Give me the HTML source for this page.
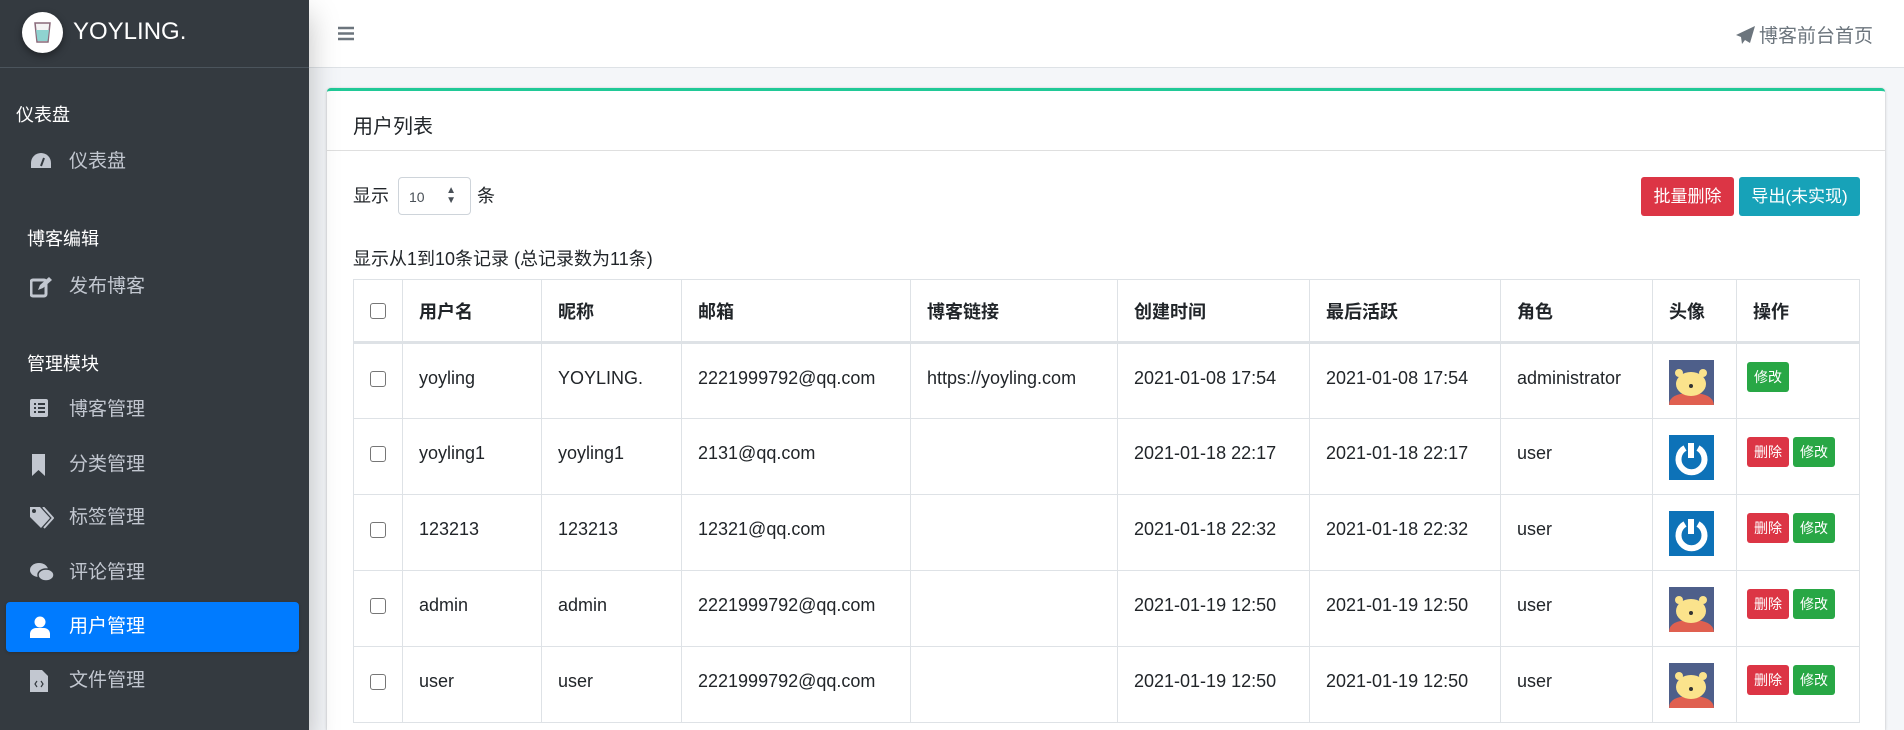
<!DOCTYPE html>
<html><head><meta charset="utf-8"><style>
*{box-sizing:border-box;margin:0;padding:0}
html,body{width:1904px;height:730px;overflow:hidden}
body{background:#f4f6f9;font-family:"Liberation Sans","Noto Sans CJK SC",sans-serif;color:#212529;position:relative}
.sb{position:absolute;left:0;top:0;width:309px;height:730px;background:#343a40;box-shadow:0 14px 28px rgba(0,0,0,.25);z-index:2}
.brand{height:68px;border-bottom:1px solid #4b545c;position:relative}
.logo{position:absolute;left:22px;top:12px;width:41px;height:41px;border-radius:50%;background:#fff;box-shadow:0 3px 8px rgba(0,0,0,.4)}
.bt{position:absolute;left:73px;top:18px;font-size:24px;color:#fff;font-weight:300}
.sec{position:absolute;color:#fff;font-size:18px}
.it{position:absolute;left:6px;width:293px;height:50px;color:#c2c7d0;font-size:19px;line-height:50px;padding-left:63px;border-radius:4px}
.it svg{position:absolute;left:24px;top:14px}
.it.act{background:#007bff;color:#fff;box-shadow:0 1px 3px rgba(0,0,0,.2)}
.hd{position:absolute;left:309px;top:0;right:0;height:68px;background:#fff;border-bottom:1px solid #dee2e6}
.card{position:absolute;left:327px;top:88px;width:1558px;height:642px;overflow:hidden;background:#fff;border-top:3px solid #20c997;border-radius:4px 4px 0 0;box-shadow:0 0 1px rgba(0,0,0,.125),0 1px 3px rgba(0,0,0,.2)}
.ch{height:60px;border-bottom:1px solid rgba(0,0,0,.125);font-size:20px;padding:19px 0 0 26px}
table{position:absolute;left:26px;top:188px;border-collapse:collapse;font-size:18px;table-layout:fixed}
td,th{border:1px solid #dee2e6;padding:0 16px;text-align:left;vertical-align:middle;white-space:nowrap;overflow:hidden}
th{height:63px;border-bottom:3px solid #dee2e6;font-weight:bold}
td{height:76px;vertical-align:top;padding-top:24px}
.cb{width:16px;height:16px;border:1px solid #767676;border-radius:3px;display:inline-block;vertical-align:middle}
.b{display:inline-block;color:#fff;font-size:14px;width:42px;height:30px;line-height:30px;text-align:center;border-radius:3px;margin-right:4px}
.r{background:#dc3545}.g{background:#28a745}
.av{width:45px;height:45px;display:block;margin-top:-8px}
td.op{padding-left:10px;padding-top:18px}
</style></head><body>
<div class="sb">
 <div class="brand"><div class="logo"><svg width="41" height="41" viewBox="0 0 41 41"><path d="M13 11h15l-2 19h-11z" fill="#f4f4f4" stroke="#8a6a7a" stroke-width="1.5"/><path d="M14 18h13l-1.5 11h-10z" fill="#8fd3d0"/></svg></div><div class="bt">YOYLING.</div></div>
 <div class="sec" style="left:16px;top:101px">仪表盘</div>
 <div class="it" style="top:137px"><svg width="22" height="20" viewBox="0 0 22 20"><path d="M11 2A10 10 0 0 0 1 12v5h20v-5A10 10 0 0 0 11 2z" fill="#c2c7d0"/><path d="M11 15l3-8" stroke="#343a40" stroke-width="2"/></svg>仪表盘</div>
 <div class="sec" style="left:27px;top:225px">博客编辑</div>
 <div class="it" style="top:262px"><svg width="22" height="22" viewBox="0 0 22 22"><rect x="1" y="4" width="15" height="16" rx="2" fill="none" stroke="#c2c7d0" stroke-width="3"/><path d="M8 14l2-5 9-8 3 3-9 8z" fill="#c2c7d0"/></svg>发布博客</div>
 <div class="sec" style="left:27px;top:350px">管理模块</div>
 <div class="it" style="top:385px"><svg width="20" height="20"><rect width="18" height="18" rx="2" fill="#c2c7d0"/><path d="M4 5h2M8 5h7M4 9h2M8 9h7M4 13h2M8 13h7" stroke="#343a40" stroke-width="2"/></svg>博客管理</div>
 <div class="it" style="top:440px"><svg width="18" height="22"><path d="M2 0h13v22l-6.5-6L2 22z" fill="#c2c7d0"/></svg>分类管理</div>
 <div class="it" style="top:493px"><svg width="24" height="22"><path d="M0 0h10l10 11-9 10L0 10z" fill="#c2c7d0"/><circle cx="4" cy="4" r="2" fill="#343a40"/><path d="M13 0l10 11-9 10" stroke="#c2c7d0" stroke-width="2" fill="none"/></svg>标签管理</div>
 <div class="it" style="top:548px"><svg width="24" height="22"><ellipse cx="9" cy="8" rx="9" ry="7" fill="#c2c7d0"/><ellipse cx="16" cy="13" rx="8" ry="6" fill="#c2c7d0" stroke="#343a40" stroke-width="1.5"/></svg>评论管理</div>
 <div class="it act" style="top:602px"><svg width="20" height="22"><circle cx="10" cy="6" r="5.5" fill="#fff"/><path d="M0 22v-4a6 6 0 0 1 6-6h8a6 6 0 0 1 6 6v4z" fill="#fff"/></svg>用户管理</div>
 <div class="it" style="top:656px"><svg width="18" height="22"><path d="M0 0h12l6 6v16H0z" fill="#c2c7d0"/><path d="M7 11l-2 3 2 3M11 11l2 3-2 3" stroke="#343a40" stroke-width="1.2" fill="none"/></svg>文件管理</div>
</div>
<div class="hd">
 <svg style="position:absolute;left:29px;top:26px" width="16" height="15"><path d="M0 2h16M0 7.5h16M0 13h16" stroke="#6c757d" stroke-width="2.5"/></svg>
 <div style="position:absolute;right:31px;top:21px;font-size:19px;color:#6c757d"><svg width="19" height="18" viewBox="0 0 19 18" style="vertical-align:-2px;margin-right:4px"><path d="M19 0L0 9l5 2 1 7 3-4 5 3z" fill="#6c757d"/></svg>博客前台首页</div>
</div>
<div class="card">
 <div class="ch">用户列表</div>
 <div style="position:absolute;left:26px;top:91px;font-size:18px">显示</div>
 <div style="position:absolute;left:71px;top:86px;width:73px;height:38px;border:1px solid #ced4da;border-radius:4px;font-size:14px;padding:11px 0 0 10px;color:#495057">10<span style="position:absolute;right:14px;top:8px;font-size:10px;line-height:10px">▲<br>▼</span></div>
 <div style="position:absolute;left:150px;top:91px;font-size:18px">条</div>
 <div class="b r" style="position:absolute;left:1314px;top:86px;width:93px;height:39px;line-height:39px;font-size:17px">批量删除</div>
 <div class="b" style="position:absolute;left:1412px;top:86px;width:121px;height:39px;line-height:39px;font-size:17px;background:#17a2b8">导出(未实现)</div>
 <div style="position:absolute;left:26px;top:154px;font-size:18px">显示从1到10条记录 (总记录数为11条)</div>
 <table>
 <colgroup><col style="width:49px"><col style="width:139px"><col style="width:140px"><col style="width:229px"><col style="width:207px"><col style="width:192px"><col style="width:191px"><col style="width:152px"><col style="width:84px"><col style="width:123px"></colgroup>
 <tr><th><span class="cb"></span></th><th>用户名</th><th>昵称</th><th>邮箱</th><th>博客链接</th><th>创建时间</th><th>最后活跃</th><th>角色</th><th>头像</th><th>操作</th></tr>
 <tr><td><span class="cb"></span></td><td>yoyling</td><td>YOYLING.</td><td>2221999792@qq.com</td><td>https://yoyling.com</td><td>2021-01-08 17:54</td><td>2021-01-08 17:54</td><td>administrator</td><td><svg class="av" viewBox="0 0 45 45"><rect width="45" height="45" fill="#4e5f8a"/><path d="M0 45q0-12 22-12t23 12z" fill="#e06050"/><ellipse cx="22" cy="24" rx="15" ry="12" fill="#fbe38c"/><circle cx="10" cy="13" r="4" fill="#fbe38c"/><circle cx="34" cy="13" r="4" fill="#fbe38c"/><circle cx="22" cy="26" r="2" fill="#333"/></svg></td><td class="op"><span class="b g">修改</span></td></tr>
 <tr><td><span class="cb"></span></td><td>yoyling1</td><td>yoyling1</td><td>2131@qq.com</td><td></td><td>2021-01-18 22:17</td><td>2021-01-18 22:17</td><td>user</td><td><svg class="av" viewBox="0 0 45 45"><rect width="45" height="45" fill="#0d72b8"/><path d="M16 13a13 13 0 1 0 13 0" fill="none" stroke="#fff" stroke-width="6"/><path d="M22 8v15" stroke="#fff" stroke-width="6"/></svg></td><td class="op"><span class="b r">删除</span><span class="b g">修改</span></td></tr>
 <tr><td><span class="cb"></span></td><td>123213</td><td>123213</td><td>12321@qq.com</td><td></td><td>2021-01-18 22:32</td><td>2021-01-18 22:32</td><td>user</td><td><svg class="av" viewBox="0 0 45 45"><rect width="45" height="45" fill="#0d72b8"/><path d="M16 13a13 13 0 1 0 13 0" fill="none" stroke="#fff" stroke-width="6"/><path d="M22 8v15" stroke="#fff" stroke-width="6"/></svg></td><td class="op"><span class="b r">删除</span><span class="b g">修改</span></td></tr>
 <tr><td><span class="cb"></span></td><td>admin</td><td>admin</td><td>2221999792@qq.com</td><td></td><td>2021-01-19 12:50</td><td>2021-01-19 12:50</td><td>user</td><td><svg class="av" viewBox="0 0 45 45"><rect width="45" height="45" fill="#4e5f8a"/><path d="M0 45q0-12 22-12t23 12z" fill="#e06050"/><ellipse cx="22" cy="24" rx="15" ry="12" fill="#fbe38c"/><circle cx="10" cy="13" r="4" fill="#fbe38c"/><circle cx="34" cy="13" r="4" fill="#fbe38c"/><circle cx="22" cy="26" r="2" fill="#333"/></svg></td><td class="op"><span class="b r">删除</span><span class="b g">修改</span></td></tr>
 <tr><td><span class="cb"></span></td><td>user</td><td>user</td><td>2221999792@qq.com</td><td></td><td>2021-01-19 12:50</td><td>2021-01-19 12:50</td><td>user</td><td><svg class="av" viewBox="0 0 45 45"><rect width="45" height="45" fill="#4e5f8a"/><path d="M0 45q0-12 22-12t23 12z" fill="#e06050"/><ellipse cx="22" cy="24" rx="15" ry="12" fill="#fbe38c"/><circle cx="10" cy="13" r="4" fill="#fbe38c"/><circle cx="34" cy="13" r="4" fill="#fbe38c"/><circle cx="22" cy="26" r="2" fill="#333"/></svg></td><td class="op"><span class="b r">删除</span><span class="b g">修改</span></td></tr>
 </table>
</div>
</body></html>
